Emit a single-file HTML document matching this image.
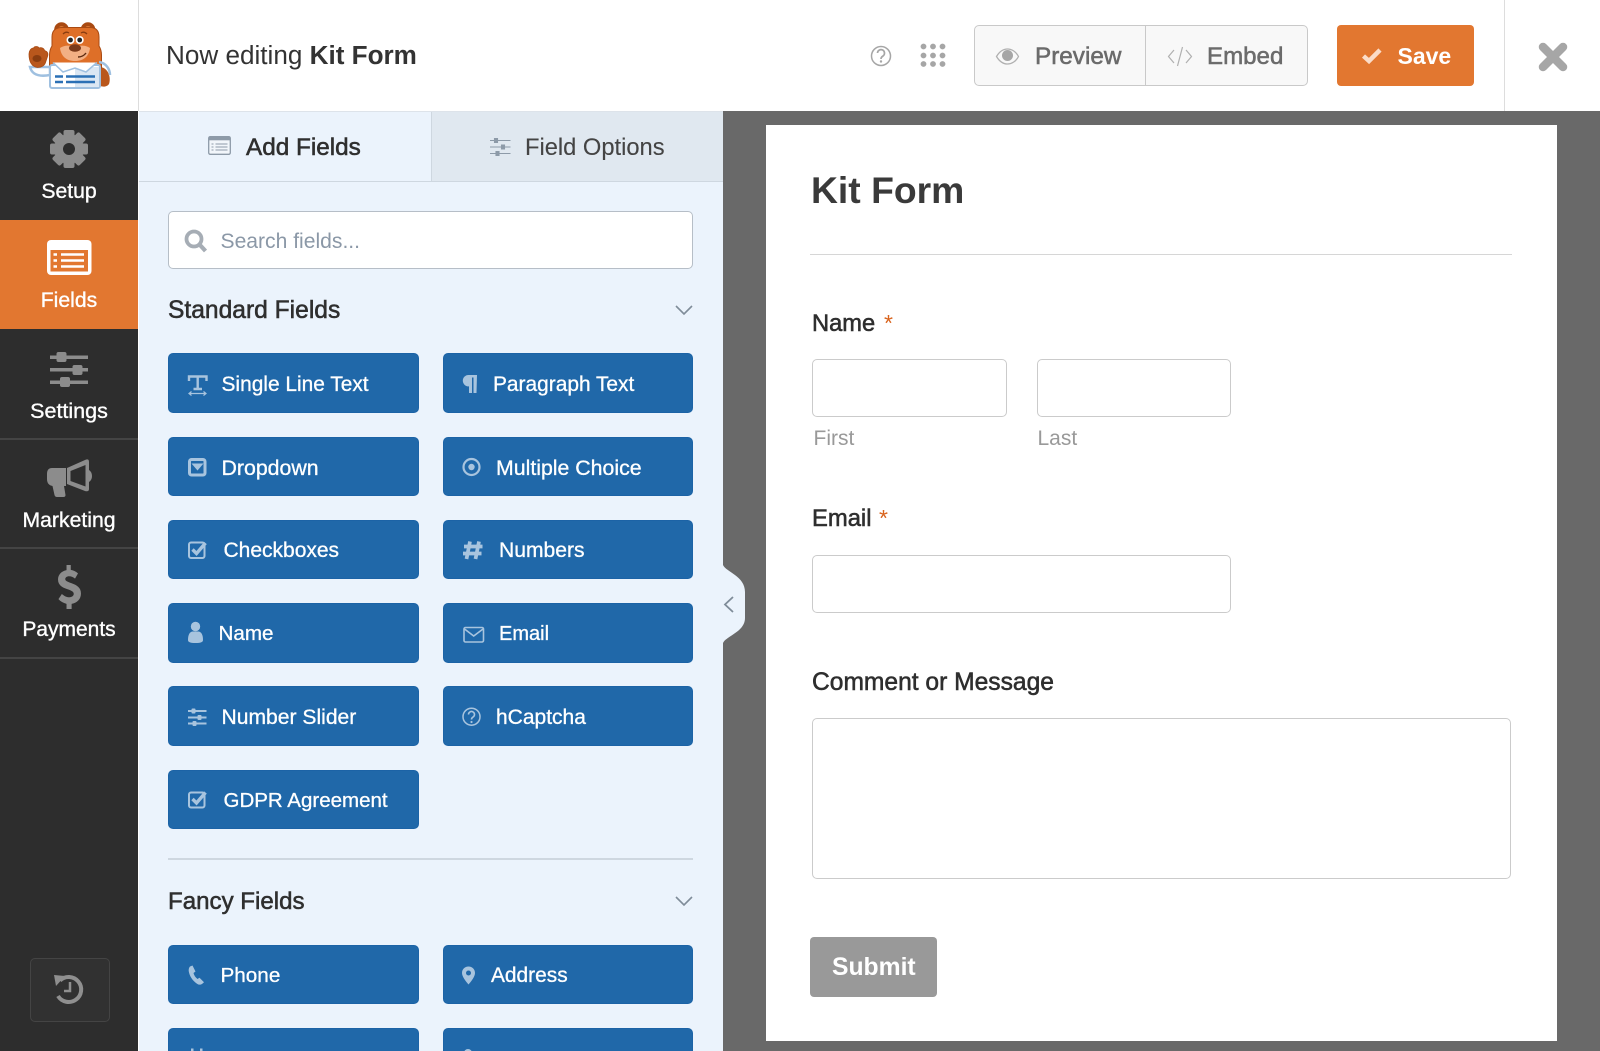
<!DOCTYPE html>
<html lang="en">
<head>
<meta charset="utf-8">
<title>Now editing Kit Form</title>
<style>
html,body{margin:0;padding:0;width:1600px;height:1051px;overflow:hidden;background:#fff}
body{position:relative;font-family:"Liberation Sans",sans-serif;color:#333}
.b{position:absolute;box-sizing:border-box}
.t{position:absolute;white-space:nowrap;line-height:30px;height:30px}
.m{-webkit-text-stroke:.55px currentColor}
.side{color:#fff;font-size:21.2px;left:0;width:138px;text-align:center;-webkit-text-stroke:.35px #fff}
.fb{position:absolute;box-sizing:border-box;width:250.5px;height:59.5px;background:#2068a9;border-radius:5px;border:1px solid #1c63a6}
.bt{position:absolute;white-space:nowrap;line-height:30px;height:30px;color:#fff;font-size:21px;-webkit-text-stroke:.3px #fff}
.inp{position:absolute;box-sizing:border-box;background:#fff;border:1.5px solid #cbcbcb;border-radius:5px}
.lab{font-size:23.7px;color:#2e2e2e}
.req{color:#d9641e;font-size:23px}
svg{position:absolute;left:0;top:0}
</style>
</head>
<body>
<!-- sidebar -->
<div class="b" style="left:0;top:111px;width:138px;height:940px;background:#2d2d2d"></div>
<div class="b" style="left:0;top:220px;width:138px;height:109px;background:#e27730"></div>
<div class="b" style="left:0;top:438px;width:138px;height:2px;background:#444"></div>
<div class="b" style="left:0;top:547px;width:138px;height:2px;background:#444"></div>
<div class="b" style="left:0;top:657px;width:138px;height:2px;background:#444"></div>
<div class="b" style="left:29.5px;top:958px;width:80px;height:64px;background:#313131;border:1.5px solid #444;border-radius:5px"></div>
<div class="t side" style="top:177px">Setup</div>
<div class="t side" style="top:286px">Fields</div>
<div class="t side" style="top:396px;font-size:21.5px">Settings</div>
<div class="t side" style="top:506px">Marketing</div>
<div class="t side" style="top:615px;font-size:21px">Payments</div>

<!-- header -->
<div class="b" style="left:138px;top:0;width:1px;height:111px;background:#ddd"></div>
<div class="b" style="left:1504px;top:0;width:1px;height:111px;background:#ddd"></div>
<div class="t" style="left:166px;top:40px;font-size:26.100px;color:#333">Now editing <b>Kit Form</b></div>
<div class="b" style="left:974px;top:25px;width:334px;height:61px;background:#f8f8f8;border:1.5px solid #c9c9c9;border-radius:5px"></div>
<div class="b" style="left:1145px;top:26px;width:1px;height:59px;background:#c9c9c9"></div>
<div class="t m" style="left:1035px;top:42px;font-size:24.3px;color:#6b6b6b">Preview</div>
<div class="t m" style="left:1207px;top:42px;font-size:24.1px;color:#6b6b6b">Embed</div>
<div class="b" style="left:1337px;top:25px;width:137px;height:61px;background:#e27730;border-radius:4px"></div>
<div class="t" style="left:1397.5px;top:41px;font-size:23px;font-weight:700;color:#fff">Save</div>

<!-- panel -->
<div class="b" style="left:139px;top:111px;width:584px;height:940px;background:#ebf3fc"></div>
<div class="b" style="left:431px;top:111px;width:292px;height:71px;background:#e0e8f0;border-left:1px solid #ced7e0"></div>
<div class="b" style="left:139px;top:181px;width:584px;height:1px;background:#ced7e0"></div>
<div class="b" style="left:139px;top:111px;width:584px;height:1px;background:#dde3ea"></div>
<div class="t m" style="left:246px;top:132.500px;font-size:24.3px;color:#2f2f2f">Add Fields</div>
<div class="t" style="left:525px;top:132.500px;font-size:23.7px;color:#444;-webkit-text-stroke:.1px #444">Field Options</div>
<div class="b" style="left:168px;top:210.5px;width:525px;height:58px;background:#fff;border:1.5px solid #b6bec7;border-radius:5px"></div>
<div class="t" style="left:220.5px;top:226.500px;font-size:21.1px;color:#8b98a7">Search fields...</div>
<div class="t m" style="left:168px;top:296px;font-size:24.6px;color:#2f2f2f">Standard Fields</div>
<div class="t m" style="left:168px;top:887px;font-size:24.100px;color:#2f2f2f">Fancy Fields</div>
<div class="b" style="left:168px;top:858px;width:525px;height:2px;background:#ced7e0"></div>

<div class="fb" style="left:168px;top:353.3px"></div><div class="fb" style="left:442.5px;top:353.3px"></div>
<div class="fb" style="left:168px;top:436.6px"></div><div class="fb" style="left:442.5px;top:436.6px"></div>
<div class="fb" style="left:168px;top:519.8px"></div><div class="fb" style="left:442.5px;top:519.8px"></div>
<div class="fb" style="left:168px;top:603px"></div><div class="fb" style="left:442.5px;top:603px"></div>
<div class="fb" style="left:168px;top:686.2px"></div><div class="fb" style="left:442.5px;top:686.2px"></div>
<div class="fb" style="left:168px;top:769.5px"></div>
<div class="fb" style="left:168px;top:944.7px"></div><div class="fb" style="left:442.5px;top:944.7px"></div>
<div class="fb" style="left:168px;top:1028px"></div><div class="fb" style="left:442.5px;top:1028px"></div>

<div class="bt" style="left:221.5px;top:370px;font-size:20.9px">Single Line Text</div>
<div class="bt" style="left:493px;top:370px;font-size:20.9px">Paragraph Text</div>
<div class="bt" style="left:221.5px;top:452.500px;font-size:21.3px">Dropdown</div>
<div class="bt" style="left:496px;top:452.500px;font-size:21.3px">Multiple Choice</div>
<div class="bt" style="left:223.5px;top:536px">Checkboxes</div>
<div class="bt" style="left:499px;top:536px;font-size:21.100px">Numbers</div>
<div class="bt" style="left:218.5px;top:619px;font-size:20.6px">Name</div>
<div class="bt" style="left:499px;top:619px;font-size:20px">Email</div>
<div class="bt" style="left:221.5px;top:702.500px;font-size:21.1px">Number Slider</div>
<div class="bt" style="left:496px;top:702.500px;font-size:21px">hCaptcha</div>
<div class="bt" style="left:223.5px;top:785.500px;font-size:20.5px">GDPR Agreement</div>
<div class="bt" style="left:220.5px;top:961px;font-size:20.7px">Phone</div>
<div class="bt" style="left:491px;top:961px;font-size:20.9px">Address</div>
<div class="bt" style="left:222px;top:1046px;font-size:21px">Date / Time</div>
<div class="bt" style="left:494px;top:1046px;font-size:21px">Website / URL</div>

<!-- canvas -->
<div class="b" style="left:723px;top:111px;width:877px;height:940px;background:#696969"></div>
<div class="b" style="left:766px;top:125px;width:791px;height:916px;background:#fff"></div>
<div class="t" style="left:811px;top:174px;font-size:37.300px;font-weight:700;color:#3a3a3a;height:32px;line-height:32px">Kit Form</div>
<div class="b" style="left:810px;top:254px;width:702px;height:1px;background:#d6d6d6"></div>
<div class="t m lab" style="left:812px;top:309px">Name</div>
<div class="t req" style="left:884px;top:308px">*</div>
<div class="inp" style="left:812px;top:359px;width:195px;height:58px"></div>
<div class="inp" style="left:1037px;top:359px;width:193.5px;height:58px"></div>
<div class="t" style="left:813.5px;top:423.500px;font-size:21px;color:#999">First</div>
<div class="t" style="left:1037.5px;top:423.500px;font-size:21px;color:#999">Last</div>
<div class="t m lab" style="left:812px;top:504px;font-size:23.8px">Email</div>
<div class="t req" style="left:879px;top:503px">*</div>
<div class="inp" style="left:812px;top:555px;width:418.5px;height:58px"></div>
<div class="t m lab" style="left:812px;top:667.500px;font-size:24.6px">Comment or Message</div>
<div class="inp" style="left:812px;top:718px;width:698.5px;height:161px"></div>
<div class="b" style="left:810px;top:937px;width:127px;height:60px;background:#999;border-radius:4px"></div>
<div class="t" style="left:832px;top:952.500px;font-size:24.7px;font-weight:700;color:#fff">Submit</div>

<svg width="1600" height="1051" viewBox="0 0 1600 1051" fill="none">
  <!-- collapse bump -->
  <path d="M723 565C726 572 745 576 745 592V618C745 632 726 636 723 643Z" fill="#ebf3fc"/>
  <path d="M733 597l-8 7.500 8 7.500" stroke="#7f8c99" stroke-width="1.800"/>

  <!-- logo -->
  <path d="M101 67c8 2 10 11 8 17-2 3-6 3-9 2z" fill="#b9571c"/>
  <circle cx="61.500" cy="29.500" r="7.300" fill="#a94a12"/><circle cx="61.500" cy="30.500" r="4.200" fill="#e8853f"/>
  <circle cx="88" cy="29.500" r="7.300" fill="#a94a12"/><circle cx="88" cy="30.500" r="4.200" fill="#e8853f"/>
  <path d="M52 37Q52 27.500 62 27.500H90Q99 27.500 99 37V46Q101.500 50 101.500 55V68H49.500V55Q49.500 50 52 46Z" fill="#de6f28" stroke="#a94a12" stroke-width="1"/>
  <path d="M60 48c4-3 10-3 15-1 5-2 11-2 15 1-1 8-6 13-15 13s-14-5-15-13z" fill="#f2b084"/>
  <path d="M63 34q3-3 6-1M81 33q3-2 6 1" stroke="#8a3d10" stroke-width="1.300"/>
  <circle cx="70.500" cy="40" r="4" fill="#fff"/><circle cx="70.500" cy="40" r="2.400" fill="#222"/>
  <circle cx="79.700" cy="40" r="4" fill="#fff"/><circle cx="79.700" cy="40" r="2.400" fill="#222"/>
  <ellipse cx="75" cy="48" rx="6" ry="3.800" fill="#7a3a1a"/>
  <path d="M78 57q5 0 8-4" stroke="#5a2a10" stroke-width="1.400"/>
  <path d="M30 67c2 8 9 10 20 8v-8H34z" fill="#fff" stroke="#9fc0e0" stroke-width="2.500"/>
  <path d="M29 54c0-3 2-6 4.500-6 1-2 4.500-2 5.500 0 2-1 5 0 5.500 2.500 3 1 4 3 3 6l-2 6c-1 3-4 5-8 5-6-1-8.500-6.500-8.500-13.500z" fill="#b9571c" stroke="#a94a12" stroke-width=".8"/>
  <ellipse cx="37" cy="58.500" rx="4.500" ry="3.500" fill="#8a3d10"/>
  <path d="M99 62c7 1 11 7 11 13" stroke="#9fc0e0" stroke-width="2.500"/>
  <rect x="50" y="65" width="50" height="23" rx="2" fill="#fff" stroke="#9fc0e0" stroke-width="2"/>
  <path d="M75 67h24v20H75z" fill="#dbe7f3"/>
  <path d="M53 62.500l10 9.500 12-4 11 4 11-9.500" fill="#fff" stroke="#9fc0e0" stroke-width="1.500"/>
  <path d="M55 76.500h8M66 76.500h29M55 82h8M66 82h29" stroke="#2b70b5" stroke-width="2.500"/>

  <!-- sidebar icons -->
  <g fill="#8c8c8c">
    <g transform="translate(69 149)">
      <rect x="-5.500" y="-19" width="11" height="38" rx="2"/>
      <rect x="-5.500" y="-19" width="11" height="38" rx="2" transform="rotate(45)"/>
      <rect x="-5.500" y="-19" width="11" height="38" rx="2" transform="rotate(90)"/>
      <rect x="-5.500" y="-19" width="11" height="38" rx="2" transform="rotate(135)"/>
      <circle r="15"/>
      <circle r="6" fill="#2d2d2d"/>
    </g>
    <rect x="50" y="355.500" width="38" height="3.500"/><rect x="50" y="368" width="38" height="3.500"/><rect x="50" y="380.500" width="38" height="3.500"/>
    <rect x="56.500" y="352" width="10" height="10" rx="2"/><rect x="72.500" y="365" width="10" height="10" rx="2"/><rect x="60" y="377" width="10" height="10" rx="2"/>
    <path d="M52 468H66V486H64L65.500 495Q65.500 497 63.500 497H57Q55 497 54.500 495L52.500 486Q47 485 47 479V474Q47 468 52 468Z"/>
    <path fill-rule="evenodd" d="M67 468L85 460Q89 458 89 462V470Q92 472 92 476T89 482V489Q89 492 85 491L67 484ZM70.500 471V481L85.500 486.500V465Z"/>
    <path d="M66 571v5.500c-6 1-10 5-10 10 0 6 5 8.500 10 10l3 1c4 1.500 5.500 2.500 5.500 4.500s-2.500 3.500-5.500 3.500c-3 0-6-1.500-8.500-3.500l-4 5.500c2.500 2.500 5.500 4 9.500 5v5.500h6v-5.500c6.500-1 11-5 11-11 0-6.500-5-9-11-11l-2.500-.8c-3.500-1.200-5-2-5-3.700s2-3 4.500-3c2.500 0 5 1 7 2.500l3.500-5.500c-2.500-2-5-3.200-8.500-3.800V571Z" transform="translate(69.500 587) scale(.85 .936) translate(-69.500 -594.500)"/>
  </g>
  <rect x="47" y="240" width="44.500" height="35" rx="4" fill="#fff"/>
  <rect x="50.500" y="250" width="37.500" height="21.500" fill="#e27730"/>
  <path d="M61 254.500h23M61 260.500h23M61 266.500h23" stroke="#fff" stroke-width="2.500"/>
  <path d="M53.500 254.500h3.500M53.500 260.500h3.500M53.500 266.500h3.500" stroke="#fff" stroke-width="2.500"/>
  <path d="M60 980.500A12.500 12.500 0 1 1 58 996" stroke="#8f8f8f" stroke-width="4"/>
  <path d="M54 975l11 1-9 10z" fill="#8f8f8f"/>
  <path d="M70 982v9h-6" stroke="#8f8f8f" stroke-width="2.500"/>

  <!-- header icons -->
  <circle cx="881" cy="56" r="9.500" stroke="#a6a6a6" stroke-width="1.500"/>
  <path d="M877.500 53a3.500 3.500 0 1 1 5.500 3c-1.300.8-2 1.500-2 3" stroke="#a6a6a6" stroke-width="1.700"/>
  <circle cx="881" cy="61.500" r="1.200" fill="#a6a6a6"/>
  <g fill="#a6a6a6">
    <circle cx="923.500" cy="46.500" r="2.900"/><circle cx="933" cy="46.500" r="2.900"/><circle cx="942.500" cy="46.500" r="2.900"/>
    <circle cx="923.500" cy="55.500" r="2.900"/><circle cx="933" cy="55.500" r="2.900"/><circle cx="942.500" cy="55.500" r="2.900"/>
    <circle cx="923.500" cy="64" r="2.900"/><circle cx="933" cy="64" r="2.900"/><circle cx="942.500" cy="64" r="2.900"/>
  </g>
  <path d="M996.500 56.500c3-5 7-7.500 11-7.500s8.500 2.500 11 7.500c-2.500 5-7 7.500-11 7.500s-8-2.500-11-7.500z" stroke="#b0b0b0" stroke-width="1.300"/>
  <circle cx="1007.500" cy="55.500" r="5.500" fill="#a6a6a6"/>
  <path d="M1174 50l-5.500 6.500 5.500 6.500M1186 50l5.500 6.500-5.500 6.500M1182.500 47l-5 19" stroke="#b0b0b0" stroke-width="1.200"/>
  <path d="M1363.500 56l5.500 5 11-11" stroke="#fbdcc8" stroke-width="4.500"/>
  <path d="M1543 47l20 20M1563 47l-20 20" stroke="#a6a6a6" stroke-width="8.500" stroke-linecap="round"/>

  <!-- tab icons -->
  <rect x="208.700" y="136.700" width="21.600" height="17.600" rx="1.500" fill="#f2f6fb" stroke="#8d9aa8" stroke-width="1.300"/>
  <rect x="208.700" y="136.700" width="21.600" height="3.600" fill="#8d9aa8"/>
  <path d="M211.500 144h2M215.500 144h12M211.500 147h2M215.500 147h12M211.500 150h2M215.500 150h12" stroke="#8d9aa8" stroke-width="1.100"/>
  <g stroke="#8d9aa8" stroke-width="1.100">
    <path d="M490 140.500h20.500M490 147h20.500M490 153.500h20.500"/>
    <path d="M494.500 138.500h3v4h-3zM501.500 145h3v4h-3zM496 151.500h3v4h-3z" fill="#8d9aa8"/>
  </g>
  <circle cx="194" cy="239" r="7.500" stroke="#a6adb5" stroke-width="3.800"/>
  <path d="M199.500 244.500l6 6.500" stroke="#a6adb5" stroke-width="4.200"/>
  <path d="M676 306l8 8 8-8" stroke="#7f8c99" stroke-width="1.600"/>
  <path d="M676 897l8 8 8-8" stroke="#7f8c99" stroke-width="1.600"/>

  <!-- field icons -->
  <g stroke="#a8c4de" fill="none">
    <path d="M189 381v-4.500h17.500v4.500M197.700 376.500v12.500M193.500 389h8.500" stroke-width="2.400"/>
    <path d="M189 393.500h17M191.500 391.500l-2.500 2 2.500 2M203.500 391.500l2.500 2-2.500 2" stroke-width="1.200"/>
    <rect x="189.500" y="459.500" width="15.500" height="15.500" rx="2" stroke-width="3"/>
    <circle cx="471.500" cy="467" r="8" stroke-width="2.200"/>
    <rect x="189" y="542.500" width="15.500" height="15.500" rx="2" stroke-width="2"/>
    <path d="M192.500 549.500l4 4 9-10.500" stroke-width="3.400"/>
    <path d="M470 541.500l-3.500 17.500M479 541.500l-3.500 17.500M464 546.500h18.500M463 553.500h18.500" stroke-width="3.700"/>
    <rect x="464" y="627.500" width="19.500" height="14.500" rx="1.500" stroke-width="1.600"/>
    <path d="M464.500 629l9.200 7 9.300-7" stroke-width="1.600"/>
    <path d="M188 711h18.500M188 717.500h18.500M188 723.500h18.500" stroke-width="1.900"/>
    <circle cx="471.500" cy="716.700" r="8.500" stroke-width="1.500"/>
    <path d="M468.500 714.500a3 3 0 1 1 4.500 2.600c-1 .6-1.500 1.200-1.500 2.400" stroke-width="1.600"/>
    <rect x="189" y="792.500" width="15.500" height="15" rx="2" stroke-width="2"/>
    <path d="M192.500 799l4 4 9-10.500" stroke-width="3.400"/>
  </g>
  <g fill="#a8c4de">
    <path d="M477 375h-8.500a5.700 5.700 0 0 0 0 11.400h.5V393h3v-15.500h1.500V393h3z"/>
    <path d="M191.500 463.500h12l-6 7z"/>
    <circle cx="471.500" cy="467" r="3.200"/>
    <circle cx="195.500" cy="626.500" r="4.700"/>
    <path d="M188 640c0-5 1.500-8 4.500-8.500h6c3 .5 4.500 3.500 4.500 8.500 0 2-2 3-7.500 3s-7.500-1-7.500-3z"/>
    <rect x="191.500" y="708.500" width="4" height="5" rx="1"/><rect x="197.500" y="715" width="4" height="5" rx="1"/><rect x="192.500" y="721" width="4" height="5" rx="1"/>
    <circle cx="471.500" cy="722" r="1.100"/>
    <path d="M190 966.500l2.500-1 3 6-2 1.500c.6 2.500 2 4.500 4 6l2-1.300 4.500 4.500-2 1.800c-1.500 1-3.500.8-5-.3-4.500-3-7.500-7.500-8.300-12.700-.2-2 .5-3.700 1.300-4.500z"/>
    <path fill-rule="evenodd" d="M468.500 966.500c3.800 0 6.500 2.800 6.500 6.500 0 3.500-3.500 8-6.500 11.500-3-3.500-6.500-8-6.500-11.500 0-3.700 2.700-6.500 6.500-6.500zm0 4a2.500 2.500 0 1 0 0 5 2.500 2.500 0 0 0 0-5z"/>
    <rect x="191" y="1048.500" width="2.500" height="5"/><rect x="200" y="1048.500" width="2.500" height="5"/>
    <circle cx="468" cy="1053" r="4"/>
  </g>
</svg>
</body>
</html>
